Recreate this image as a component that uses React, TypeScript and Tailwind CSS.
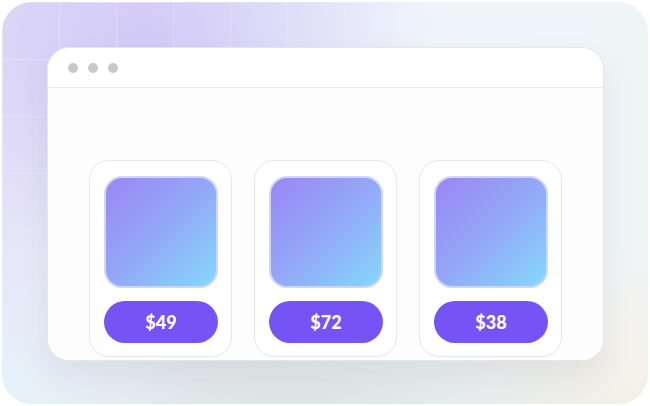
import React from "react";

const prices = ["$49", "$72", "$38"];

const PriceCard: React.FC<{ price: string }> = ({ price }) => (
  <div className="flex w-[143px] h-[197px] flex-col rounded-[20px] border-[1.5px] border-[#e7e7ea] bg-white px-[14px] pt-[15px]">
    <div className="h-[112px] w-[114px] rounded-[18px] border-2 border-[#cfd6fa] bg-[linear-gradient(135deg,#9b86f6_0%,#93a8f7_50%,#85d8fb_100%)]" />
    <div
      className="mt-[13px] flex h-[42px] w-[114px] items-center justify-center rounded-full bg-[#7553f5] text-[18px] font-black text-white"
      style={{ fontFamily: "Lato, 'Liberation Sans', sans-serif" }}
    >
      {price}
    </div>
  </div>
);

const App: React.FC = () => {
  return (
    <div className="h-[406px] w-[650px] bg-white p-[2px]">
      <div className="relative h-full w-full overflow-hidden rounded-[30px] bg-[linear-gradient(to_right,#e6e4f7_0%,#eceef8_35%,#eff5fa_60%,#eff4f7_100%)]">
        {/* soft colour washes */}
        <div className="absolute inset-0 bg-[radial-gradient(ellipse_45%_55%_at_22%_8%,rgba(205,195,247,0.85),transparent_100%),radial-gradient(ellipse_30%_45%_at_0%_100%,rgba(230,243,250,1),transparent_100%),radial-gradient(ellipse_55%_35%_at_45%_100%,rgba(222,228,228,1),transparent_100%),radial-gradient(ellipse_35%_40%_at_100%_100%,rgba(246,240,228,1),transparent_100%)]" />
        {/* faint grid, strongest top left */}
        <div className="absolute inset-0 bg-[linear-gradient(to_right,rgba(255,255,255,0.35)_1px,transparent_1px),linear-gradient(to_bottom,rgba(255,255,255,0.35)_1px,transparent_1px)] bg-[size:57px_57px] [mask-image:radial-gradient(ellipse_70%_80%_at_15%_20%,black,transparent)]" />

        <div className="relative px-[45px] pt-[45px]">
          <div className="flex h-[314px] w-[557px] flex-col overflow-hidden rounded-[22px] border border-[#e6e6ea] bg-white shadow-[0_14px_30px_rgba(60,70,80,0.08)]">
            <div className="flex h-[40px] shrink-0 items-center gap-[10px] border-b-[1.5px] border-[#ebebee] pl-[20px]">
              <span className="h-[10px] w-[10px] rounded-full bg-[#c9c9cd]" />
              <span className="h-[10px] w-[10px] rounded-full bg-[#c9c9cd]" />
              <span className="h-[10px] w-[10px] rounded-full bg-[#c9c9cd]" />
            </div>
            <div className="flex flex-1 justify-center gap-[22px] bg-[#fdfdfe] pt-[72px]">
              {prices.map((p) => (
                <PriceCard key={p} price={p} />
              ))}
            </div>
          </div>
        </div>
      </div>
    </div>
  );
};

export default App;
